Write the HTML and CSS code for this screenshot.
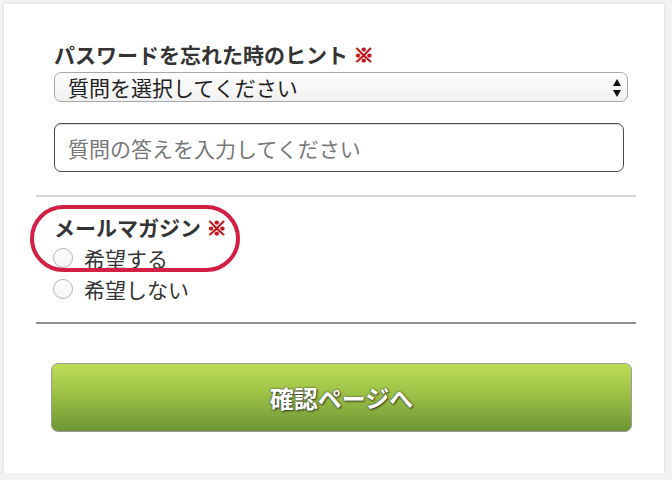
FILE: index.html
```html
<!DOCTYPE html>
<html lang="ja">
<head>
<meta charset="utf-8">
<title>フォーム</title>
<link rel="stylesheet" href="styles.css">
</head>
<body>
<div class="card">
  <section class="field">
    <div class="label">パスワードを忘れた時のヒント <span class="req">※</span></div>
    <div class="select-wrap">
      <select class="select"><option>質問を選択してください</option></select>
      <svg class="arrows" width="10" height="20" viewBox="0 0 10 20"><path d="M1 8 L5 1 L9 8 Z M1 12 L9 12 L5 19 Z" fill="#111"/></svg>
    </div>
    <input class="text" type="text" placeholder="質問の答えを入力してください">
  </section>
  <hr class="rule light">
  <section class="field radios">
    <div class="highlight">
      <div class="label l2">メールマガジン <span class="req">※</span></div>
      <label class="radio"><span class="dot"></span>希望する</label>
    </div>
    <label class="radio"><span class="dot"></span>希望しない</label>
  </section>
  <hr class="rule dark">
  <button class="submit" type="button">確認ページへ</button>
</div>
</body>
</html>
```
FILE: styles.css
```css
html, body {
  margin: 0;
  padding: 0;
}
body {
  background: #f2f2f2;
  font-family: "Noto Sans CJK JP", "Noto Sans", sans-serif;
  color: #333;
}
.card {
  box-sizing: border-box;
  margin: 4px 0 0 4px;
  width: 660px;
  height: 469px;
  background: #fff;
  box-shadow: 0 0 3px rgba(0, 0, 0, 0.12);
  padding: 38px 28px 0 32px;
}
.field {
  padding-left: 18px;
}
.label {
  font-size: 21px;
  font-weight: 700;
  line-height: 25px;
  height: 25px;
  color: #333;
  white-space: nowrap;
}
.req {
  color: #c2141b;
  font-size: 20px;
  font-weight: 700;
  -webkit-text-stroke: 1.2px #c2141b;
  margin-left: 1px;
}
.select-wrap {
  position: relative;
  margin-top: 5px;
  width: 574px;
  height: 30px;
}
.select {
  -webkit-appearance: none;
  appearance: none;
  box-sizing: border-box;
  width: 574px;
  height: 30px;
  margin: 0;
  border: 1px solid #a8a8a8;
  border-radius: 7px;
  background: linear-gradient(#fdfdfd, #f1f1f1);
  font-family: inherit;
  font-size: 21px;
  line-height: 28px;
  color: #222;
  padding: 0 0 0 13px;
}
.arrows {
  position: absolute;
  left: 558px;
  top: 6px;
}
.text {
  display: block;
  box-sizing: border-box;
  margin: 21px 0 0;
  width: 570px;
  height: 49px;
  border: 1px solid #4a4a4a;
  border-radius: 7px;
  box-shadow: inset 0 1px 1px rgba(0, 0, 0, 0.15);
  padding: 0 0 0 13px;
  font-family: inherit;
  font-size: 21px;
  color: #333;
  outline: none;
}
.text::placeholder {
  color: #777;
}
.rule {
  border: 0;
  margin: 23px 0 0;
  height: 2px;
}
.rule.light {
  background: #d6d6d6;
}
.rule.dark {
  background: #8f8f8f;
  margin-top: 18px;
}
.radios {
  padding-top: 15px;
}
.highlight {
  position: relative;
}
.highlight::before {
  content: "";
  position: absolute;
  top: -7px;
  left: -24px;
  width: 210px;
  height: 67px;
  box-sizing: border-box;
  border: 4px solid #d41f45;
  border-radius: 34px;
  pointer-events: none;
}
.l2 {
  line-height: 30px;
  height: 30px;
}
.radio {
  display: flex;
  align-items: center;
  height: 31px;
  font-size: 21px;
  color: #333;
  margin-left: -1px;
}
.dot {
  box-sizing: border-box;
  width: 20px;
  height: 20px;
  border-radius: 50%;
  border: 1px solid #b4b4b4;
  background: linear-gradient(#fff, #f4f4f4);
  margin-right: 11px;
}
.submit {
  display: block;
  box-sizing: border-box;
  margin: 39px 0 0 15px;
  width: 581px;
  height: 69px;
  border: 1px solid #9a9a9a;
  border-radius: 7px;
  background: linear-gradient(#bedd56, #97bd44 50%, #6e9535);
  color: #fff;
  font-family: inherit;
  font-size: 24px;
  font-weight: 700;
  text-shadow: 0 0 2px #333, 1px 1px 2px rgba(0, 0, 0, 0.6);
  padding: 0;
}
```
